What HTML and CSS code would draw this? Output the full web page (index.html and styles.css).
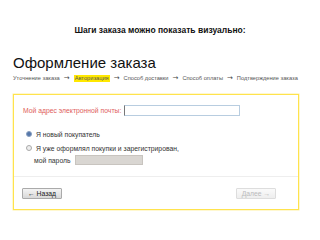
FILE: index.html
```html
<!DOCTYPE html>
<html lang="ru">
<head>
    <meta charset="UTF-8">
    <title>Шаги заказа</title>
    <link rel="stylesheet" href="styles.css">
</head>
<body>
    <div class="slide">
        <p class="caption">Шаги заказа можно показать визуально:</p>

        <h1>Оформление заказа</h1>

        <div class="steps">
            <span>Уточнение заказа</span>
            <span class="arrow">→</span>
            <span class="current">Авторизация</span>
            <span class="arrow">→</span>
            <span>Способ доставки</span>
            <span class="arrow">→</span>
            <span>Способ оплаты</span>
            <span class="arrow">→</span>
            <span>Подтверждение заказа</span>
        </div>

        <div class="order-box">
            <div class="email-row">
                <span class="email-label">Мой адрес электронной почты:</span>
                <span class="field email-field"></span>
            </div>

            <div class="option first">
                <span class="radio checked"></span>
                <span>Я новый покупатель</span>
            </div>

            <div class="option">
                <span class="radio"></span>
                <span>Я уже оформлял покупки и зарегистрирован,</span>
            </div>
            <div class="password-row">
                <span>мой пароль</span>
                <span class="field password-field"></span>
            </div>

            <div class="actions">
                <span class="btn">← Назад</span>
                <span class="btn disabled">Далее →</span>
            </div>
        </div>
    </div>
</body>
</html>
```

FILE: styles.css
```css
body {
    margin: 0;
    background-color: #fff;
    font-family: 'Liberation Sans', Arial, sans-serif;
    color: #222;
}

.slide {
    width: 320px;
    height: 240px;
    padding: 25px 21px 0 13px;
    box-sizing: border-box;
}

.caption {
    margin: 0;
    text-align: center;
    font-size: 8.5px;
    font-weight: bold;
    line-height: 10px;
    color: #111;
    padding-left: 8px;
}

h1 {
    margin: 19px 0 0 0;
    font-size: 15px;
    font-weight: normal;
    line-height: 17px;
    color: #111;
}

.steps {
    display: flex;
    align-items: center;
    gap: 2px;
    margin-top: 4px;
    height: 7px;
    font-size: 5.7px;
    line-height: 7px;
    color: #555;
    white-space: nowrap;
}

.steps .arrow {
    font-family: 'DejaVu Sans', sans-serif;
    font-size: 7px;
    line-height: 5px;
    margin: 0 2px 1px 2px;
    color: #444;
}

.steps .current {
    background-color: #ffe800;
    padding: 0 1px;
}

.order-box {
    margin-top: 12px;
    height: 116px;
    border: 1px solid #ffe34d;
    box-shadow: 0 0 0 0.5px #fff0a0;
    box-sizing: border-box;
    padding: 10px 8px 0 9px;
    font-size: 6.8px;
    color: #333;
}

.email-row {
    display: flex;
    align-items: center;
    gap: 3px;
    height: 11px;
}

.email-label {
    color: #e0605a;
}

.field {
    display: block;
    height: 10px;
    box-sizing: border-box;
}

.email-field {
    width: 116px;
    height: 11px;
    border: 1px solid #b8cde0;
    border-left-color: #777;
    background-color: #fff;
}

.option {
    display: flex;
    align-items: center;
    gap: 4px;
    height: 8px;
    margin-top: 6px;
    padding-left: 3px;
}

.option.first {
    margin-top: 14px;
}

.radio {
    width: 4px;
    height: 4px;
    border-radius: 50%;
    border: 0.5px solid #aaa;
    background-color: #eee;
}

.radio.checked {
    background-color: #5577aa;
    border-color: #8aa0c0;
}

.password-row {
    display: flex;
    align-items: center;
    gap: 4px;
    height: 10px;
    margin-top: 3px;
    padding-left: 11px;
}

.password-field {
    width: 68px;
    background-color: #d9d6d2;
    border: 1px solid #c8c4bf;
}

.actions {
    display: flex;
    justify-content: space-between;
    margin: 11px -8px 0 -9px;
    padding: 11px 22px 0 8px;
    border-top: 1px solid #eee;
}

.btn {
    display: block;
    width: 40px;
    height: 11px;
    line-height: 10px;
    box-sizing: border-box;
    text-align: center;
    font-size: 6.8px;
    color: #222;
    border: 1px solid #aaa;
    border-radius: 1px;
    background: linear-gradient(#f4f4f4, #d8d8d8);
}

.btn.disabled {
    color: #bbb;
    border-color: #ddd;
    background: linear-gradient(#fafafa, #eee);
}
```
